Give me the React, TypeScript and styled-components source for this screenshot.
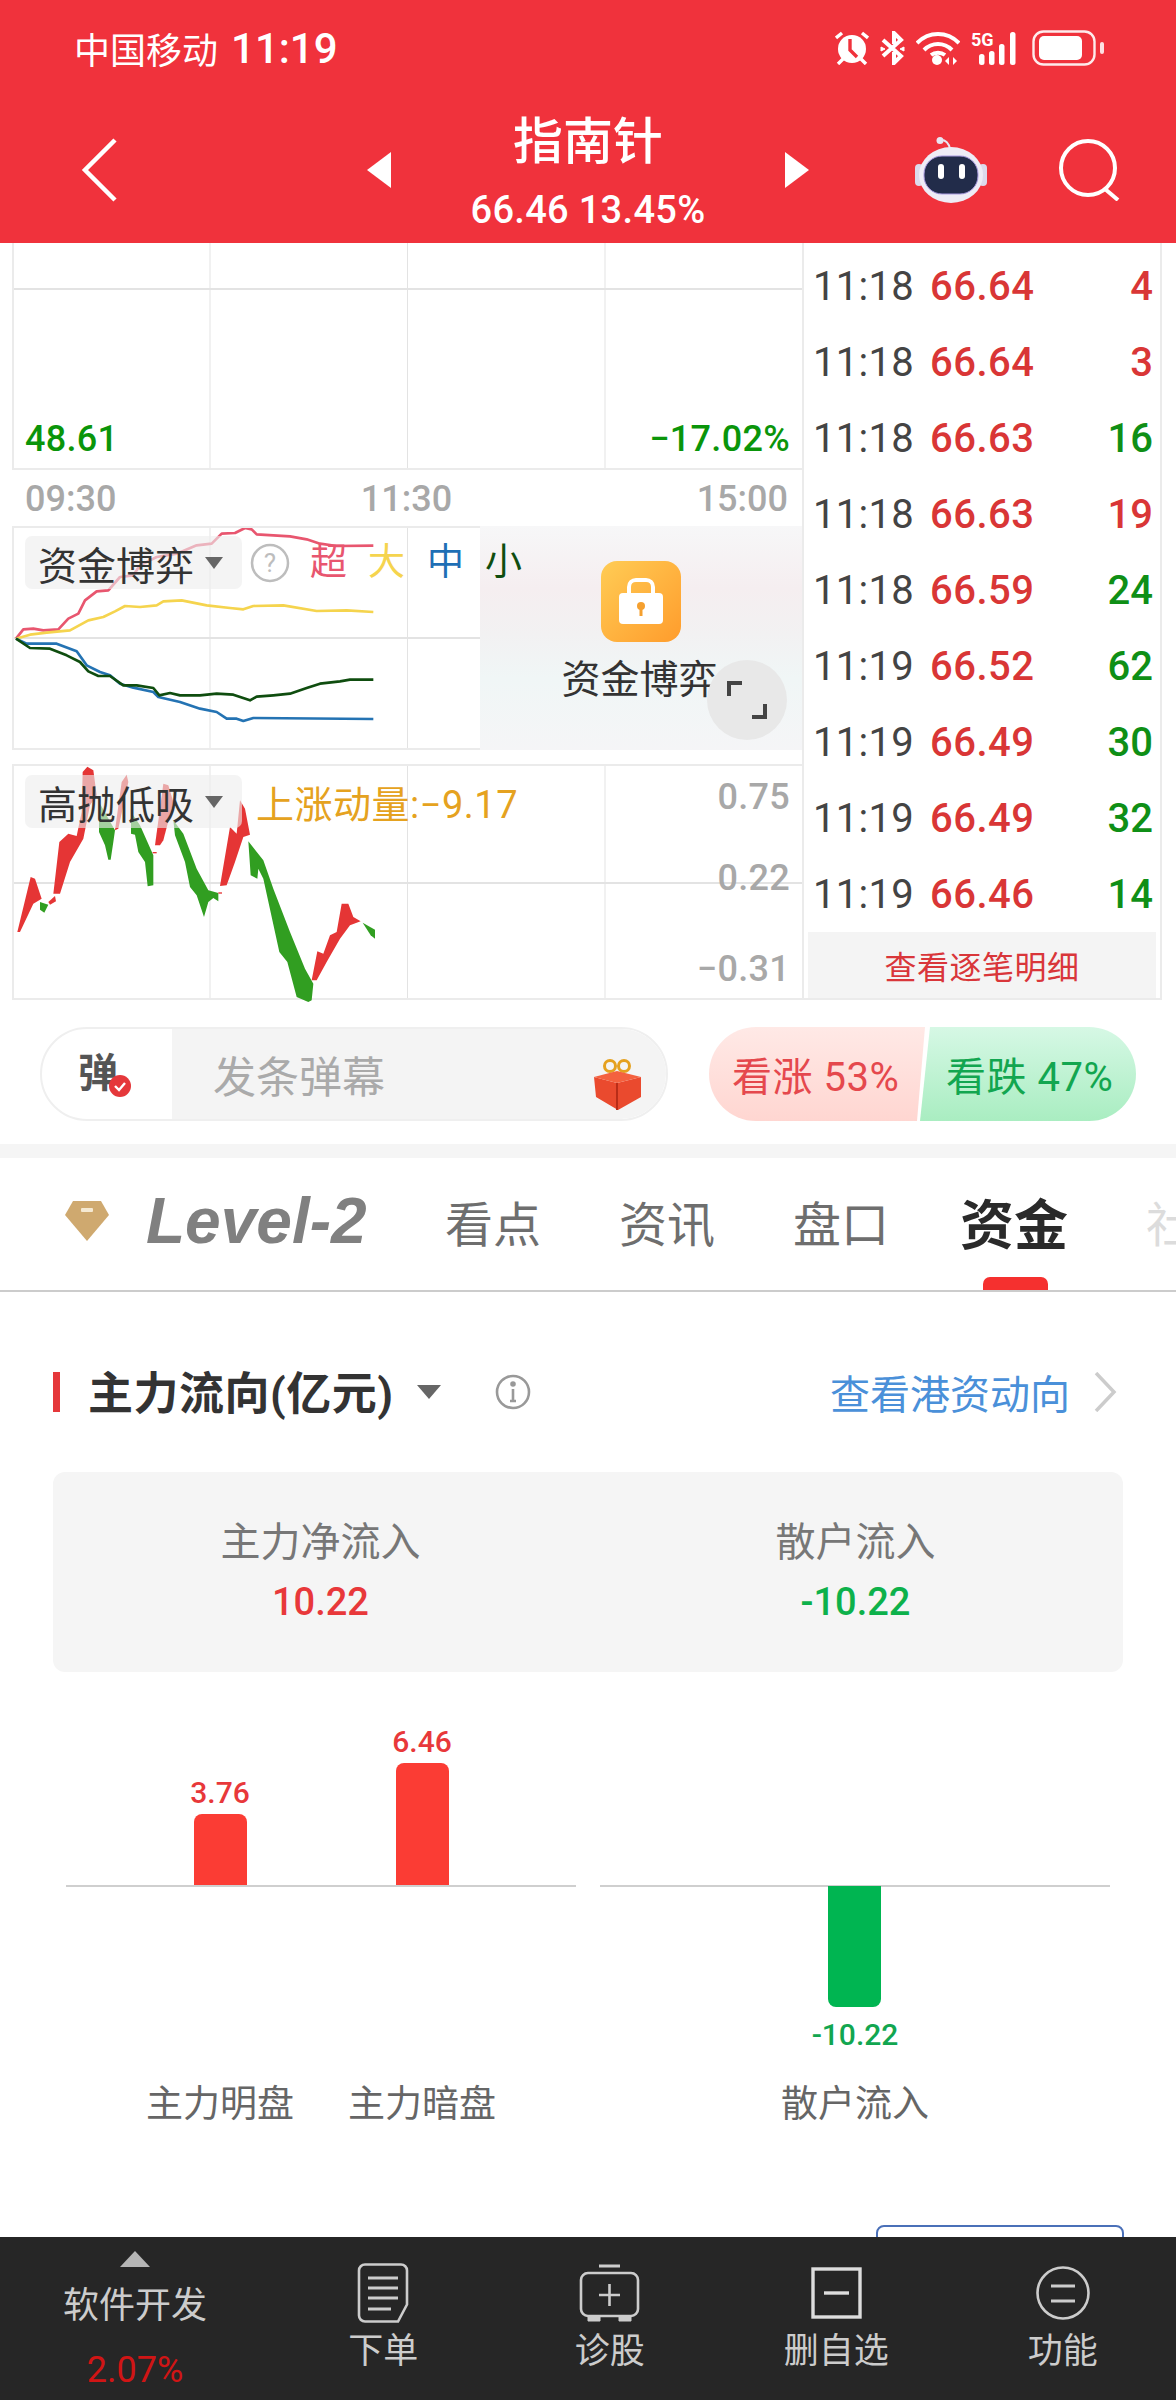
import React from "react";
import styled, { createGlobalStyle } from "styled-components";

const Global = createGlobalStyle`
  html, body {
    margin: 0;
    padding: 0;
    background: #fff;
    font-family: Roboto, "Noto Sans CJK SC", sans-serif;
  }
`;

const Page = styled.div`
  width: 1176px;
  height: 2400px;
  display: flex;
  flex-direction: column;
  overflow: hidden;
  background: #fff;
`;

const Top = styled.div`
  background: #f0323c;
  color: #fff;
  height: 243px;
  flex: none;
`;

const StatusBar = styled.div`
  height: 96px;
  display: flex;
  align-items: center;
  justify-content: space-between;
  padding: 0 71px 0 74px;
`;

const Carrier = styled.div`
  display: flex;
  align-items: center;
  gap: 13px;
  font-size: 36px;
  span:last-child {
    font-size: 42px;
    font-weight: 500;
  }
`;

const StatusIcons = styled.div`
  display: flex;
  align-items: center;
  gap: 11px;
`;

const Header = styled.div`
  height: 147px;
  display: grid;
  grid-template-columns: 1fr auto 1fr;
  align-items: center;
`;

const BackButton = styled.div`
  padding-left: 81px;
  display: flex;
`;

const Switcher = styled.div`
  width: 443px;
  display: flex;
  align-items: center;
  justify-content: space-between;
`;

const TitleBlock = styled.div`
  padding-top: 8px;
  display: flex;
  flex-direction: column;
  align-items: center;
`;

const StockName = styled.div`
  font-size: 50px;
  line-height: 56px;
  font-weight: 500;
`;

const StockPrice = styled.div`
  margin-top: 17px;
  font-size: 38px;
  line-height: 46px;
  font-weight: 500;
  letter-spacing: 0.3px;
`;

const HeaderActions = styled.div`
  display: flex;
  justify-content: flex-end;
  align-items: center;
  gap: 71px;
  padding-right: 56px;
`;

const Market = styled.div`
  flex: none;
  margin-left: 12px;
  width: 1150px;
  height: 757px;
  display: grid;
  grid-template-columns: 790px 360px;
`;

const Charts = styled.div`
  display: flex;
  flex-direction: column;
`;

const Frame = styled.div<{ $height: number; $lineY: number; $top?: boolean }>`
  position: relative;
  flex: none;
  height: ${(p) => p.$height}px;
  box-sizing: border-box;
  border-left: 2px solid #ebebeb;
  border-bottom: 2px solid #ebebeb;
  border-top: ${(p) => (p.$top ? "2px solid #ebebeb" : "0")};
  background:
    linear-gradient(#e3e3e3, #e3e3e3) 0 ${(p) => p.$lineY}px / 100% 2px no-repeat,
    linear-gradient(to right, transparent 195.5px, #e3e3e3 195.5px, #e3e3e3 197px, transparent 197px) 0 0 / 197.5px 100%;
  svg.plot {
    position: absolute;
    left: -2px;
    top: 0;
    display: block;
  }
`;

const ChartValue = styled.span<{ $side: "left" | "right"; $top: number; $color: string }>`
  position: absolute;
  ${(p) => (p.$side === "left" ? "left: 11px;" : "right: 12px;")}
  top: ${(p) => p.$top}px;
  font-size: 36px;
  line-height: 44px;
  font-weight: 500;
  letter-spacing: 0.3px;
  color: ${(p) => p.$color};
`;

const TimeAxis = styled.div`
  height: 56px;
  flex: none;
  display: flex;
  align-items: center;
  justify-content: space-between;
  padding: 2px 14px 0 13px;
  box-sizing: border-box;
  font-size: 36px;
  font-weight: 500;
  color: #a8a8a8;
`;

const Legend = styled.div`
  position: absolute;
  z-index: 2;
  left: 11px;
  top: 8px;
  display: flex;
  align-items: center;
`;

const Chip = styled.div`
  width: 217px;
  height: 53px;
  box-sizing: border-box;
  padding-left: 13px;
  display: flex;
  align-items: center;
  gap: 11px;
  border-radius: 7px;
  background: rgba(238, 238, 238, 0.62);
  color: #333;
  font-size: 39px;
  white-space: nowrap;
`;

const ChipArrow = styled.i`
  width: 0;
  height: 0;
  border-left: 9px solid transparent;
  border-right: 9px solid transparent;
  border-top: 12px solid #666;
`;

const LegendWord = styled.span<{ $color: string; $left: number }>`
  margin-left: ${(p) => p.$left}px;
  font-size: 37px;
  line-height: 44px;
  color: ${(p) => p.$color};
`;

const Momentum = styled.span`
  margin-left: 14px;
  font-size: 38px;
  letter-spacing: 0.5px;
  color: #e5a220;
  white-space: nowrap;
`;

const Locked = styled.div`
  position: absolute;
  top: -2px;
  right: 0;
  bottom: -2px;
  width: 322px;
  padding-top: 35px;
  box-sizing: border-box;
  display: flex;
  flex-direction: column;
  align-items: center;
  background: linear-gradient(180deg, #f7f7f8 0, #f5eef0 28%, #f2f1f2 48%, #f0f6f6 68%, #f5f5f7 100%);
  color: #333;
  font-size: 39px;
`;

const LockedName = styled.div`
  margin-top: 16px;
  margin-right: 3px;
  line-height: 44px;
`;

const Expand = styled.div`
  position: absolute;
  right: 15px;
  top: 134px;
  width: 80px;
  height: 80px;
  border-radius: 50%;
  background: #e8e8e8;
  display: flex;
  align-items: center;
  justify-content: center;
`;

const Ticks = styled.div`
  box-sizing: border-box;
  border-left: 2px solid #ebebeb;
  border-right: 2px solid #ebebeb;
  border-bottom: 2px solid #ebebeb;
  padding-top: 5px;
  height: 757px;
`;

const TickRow = styled.div`
  height: 76px;
  display: flex;
  align-items: center;
  padding: 0 7px 0 9px;
  font-size: 40px;
`;

const TickTime = styled.span`
  color: #444;
  width: 117px;
  letter-spacing: 0.3px;
`;

const TickPrice = styled.span`
  color: #d93636;
  font-weight: 500;
  letter-spacing: 0.5px;
`;

const TickVolume = styled.span<{ $up: boolean }>`
  margin-left: auto;
  font-weight: 500;
  color: ${(p) => (p.$up ? "#d93636" : "#0f8f16")};
`;

const TickMore = styled.div`
  margin: 0 4px;
  height: 66px;
  background: #f4f4f4;
  color: #d9363a;
  font-size: 32px;
  letter-spacing: 0.5px;
  display: flex;
  align-items: center;
  justify-content: center;
`;

const ActionRow = styled.div`
  flex: none;
  height: 144px;
  padding: 27px 40px 0 40px;
  box-sizing: border-box;
  display: flex;
  gap: 41px;
`;

const Danmu = styled.div`
  width: 628px;
  height: 94px;
  box-sizing: border-box;
  border: 2px solid #efefef;
  border-radius: 47px;
  display: flex;
  overflow: hidden;
`;

const DanmuBadge = styled.div`
  position: relative;
  width: 130px;
  flex: none;
  box-sizing: border-box;
  padding: 0 0 8px 36px;
  display: flex;
  align-items: center;
  font-size: 40px;
  font-weight: 700;
  color: #555;
  svg {
    position: absolute;
    left: 67px;
    top: 46px;
  }
`;

const DanmuInput = styled.div`
  flex: 1;
  display: flex;
  align-items: center;
  justify-content: space-between;
  padding: 0 24px 0 41px;
  background: #f4f4f4;
  color: #aaa;
  font-size: 43px;
  svg {
    margin-top: 20px;
  }
`;

const Vote = styled.div`
  width: 427px;
  height: 94px;
  border-radius: 47px;
  overflow: hidden;
  display: flex;
  font-size: 40px;
  letter-spacing: 0.5px;
`;

const VoteSide = styled.div<{ $up?: boolean }>`
  width: 216px;
  flex: none;
  display: flex;
  align-items: center;
  white-space: nowrap;
  box-sizing: border-box;
  ${(p) =>
    p.$up
      ? `padding-left: 23px;
         color: #e5484d;
         background: linear-gradient(#ffe9e6, #ffd6d1);
         clip-path: polygon(0 0, 100% 0, calc(100% - 8px) 100%, 0 100%);`
      : `margin-left: -5px;
         padding-left: 26px;
         color: #12a650;
         background: linear-gradient(#d6f8e5, #a9edc1);
         clip-path: polygon(10px 0, 100% 0, 100% 100%, 0 100%);`}
`;

const Band = styled.div`
  flex: none;
  height: 14px;
  background: #f5f5f5;
`;

const Tabs = styled.div`
  flex: none;
  position: relative;
  height: 134px;
  box-sizing: border-box;
  border-bottom: 2px solid #ccc;
  padding: 0 0 6px 65px;
  display: flex;
  align-items: center;
  overflow: hidden;
  svg {
    flex: none;
  }
`;

const LevelLogo = styled.span`
  flex: none;
  width: 220px;
  margin-left: 37px;
  margin-right: 79px;
  font-size: 64px;
  line-height: 70px;
  font-weight: 700;
  font-style: italic;
  color: #808080;
  white-space: nowrap;
  font-family: "Liberation Sans", sans-serif;
`;

const Tab = styled.span<{ $active?: boolean; $faded?: boolean }>`
  position: relative;
  flex: none;
  margin-left: ${(p) => (p.$active ? -7 : 0)}px;
  margin-right: 78px;
  font-size: ${(p) => (p.$active ? 54 : 48)}px;
  font-weight: ${(p) => (p.$active ? 700 : 400)};
  color: ${(p) => (p.$active ? "#2a2a2a" : p.$faded ? "#dcdcdc" : "#6e6e6e")};
`;

const TabMark = styled.i`
  position: absolute;
  left: 983px;
  bottom: 0;
  width: 65px;
  height: 13px;
  border-radius: 7px 7px 0 0;
  background: #f5302f;
`;

const Body = styled.div`
  flex: 1;
  min-height: 0;
  overflow: hidden;
`;

const SectionHead = styled.div`
  margin: 70px 58px 0 53px;
  height: 60px;
  display: flex;
  align-items: center;
`;

const SectionMark = styled.i`
  width: 7px;
  height: 40px;
  background: #e5383b;
  margin-right: 28px;
`;

const SectionTitle = styled.h2`
  margin: 0 0 4px;
  font-size: 45px;
  letter-spacing: 0.5px;
  font-weight: 700;
  color: #333;
`;

const HeadArrow = styled.i`
  margin: 0 54px 0 23px;
  width: 0;
  height: 0;
  border-left: 12px solid transparent;
  border-right: 12px solid transparent;
  border-top: 14px solid #666;
`;

const HeadLink = styled.a`
  margin-left: auto;
  margin-right: 23px;
  color: #4a90d9;
  font-size: 40px;
`;

const Summary = styled.div`
  margin: 50px 53px 0;
  height: 200px;
  border-radius: 12px;
  background: #f5f5f5;
  display: grid;
  grid-template-columns: 1fr 1fr;
  padding-top: 46px;
  box-sizing: border-box;
`;

const SummaryCell = styled.div`
  display: flex;
  flex-direction: column;
  align-items: center;
`;

const SummaryLabel = styled.div`
  font-size: 40px;
  line-height: 50px;
  color: #777;
`;

const SummaryValue = styled.div<{ $up: boolean }>`
  margin-top: 9px;
  font-size: 38px;
  line-height: 50px;
  font-weight: 500;
  color: ${(p) => (p.$up ? "#e8383a" : "#0db14b")};
`;

const Flow = styled.div`
  display: flex;
  gap: 24px;
  padding-left: 66px;
`;

const FlowGroup = styled.div`
  width: 510px;
  display: flex;
  justify-content: center;
  background: linear-gradient(#cfcfcf, #cfcfcf) 0 213px / 100% 2px no-repeat;
`;

const FlowColumn = styled.div`
  width: 202px;
  display: flex;
  flex-direction: column;
  align-items: center;
`;

const FlowUp = styled.div`
  height: 213px;
  display: flex;
  flex-direction: column;
  justify-content: flex-end;
  align-items: center;
`;

const FlowDown = styled.div`
  height: 198px;
  display: flex;
  flex-direction: column;
  align-items: center;
`;

const Bar = styled.div<{ $up: boolean; $h: number }>`
  width: 53px;
  height: ${(p) => p.$h}px;
  background: ${(p) => (p.$up ? "#fb3c34" : "#00b551")};
  border-radius: ${(p) => (p.$up ? "8px 8px 0 0" : "0 0 8px 8px")};
  margin-top: ${(p) => (p.$up ? 0 : 1)}px;
`;

const BarValue = styled.div<{ $up: boolean }>`
  font-size: 30px;
  line-height: 36px;
  font-weight: 500;
  margin: ${(p) => (p.$up ? "0 0 3px" : "10px 0 0")};
  color: ${(p) => (p.$up ? "#e8383a" : "#12a650")};
`;

const BarName = styled.div`
  font-size: 37px;
  line-height: 44px;
  color: #666;
  white-space: nowrap;
`;

const PeekRow = styled.div`
  margin-top: 98px;
  padding-right: 52px;
  display: flex;
  justify-content: flex-end;
`;

const PeekBox = styled.div`
  width: 248px;
  height: 60px;
  box-sizing: border-box;
  border: 2px solid #4a70b8;
  border-radius: 8px;
`;

const Nav = styled.div`
  flex: none;
  height: 163px;
  background: #262626;
  color: #ccc;
  font-size: 35px;
  display: grid;
  grid-template-columns: 270px repeat(4, 226.5px);
`;

const NavStock = styled.div`
  padding-top: 14px;
  display: flex;
  flex-direction: column;
  align-items: center;
  line-height: 44px;
`;

const NavCaret = styled.i`
  width: 0;
  height: 0;
  border-left: 15px solid transparent;
  border-right: 15px solid transparent;
  border-bottom: 16px solid #b5b5b5;
`;

const NavStockName = styled.div`
  margin-top: 17px;
  font-size: 36px;
`;

const NavStockPct = styled.div`
  margin-top: 20px;
  color: #d01515;
  font-size: 36px;
`;

const NavItem = styled.div`
  padding-top: 26px;
  display: flex;
  flex-direction: column;
  align-items: center;
`;

const NavIcon = styled.div`
  height: 60px;
  display: flex;
  align-items: center;
`;

const NavLabel = styled.div`
  margin-top: 7px;
  line-height: 44px;
`;

const ticks = [
  ["11:18", "66.64", "4", true],
  ["11:18", "66.64", "3", true],
  ["11:18", "66.63", "16", false],
  ["11:18", "66.63", "19", true],
  ["11:18", "66.59", "24", false],
  ["11:19", "66.52", "62", false],
  ["11:19", "66.49", "30", false],
  ["11:19", "66.49", "32", false],
  ["11:19", "66.46", "14", false],
] as const;

const gameLines = [
  {
    color: "#e8566f",
    points:
      "48,350 70,322 100,320 130,325 175,322 205,290 235,275 255,235 290,208 325,205 360,165 400,160 420,130 470,105 530,95 590,70 635,65 665,35 705,33 735,18 755,22 770,37 820,40 870,43 920,52 960,65 1010,72 1120,71",
  },
  {
    color: "#f5d44e",
    points:
      "48,350 90,338 140,332 210,325 265,295 310,285 345,268 375,252 420,255 470,250 490,238 545,235 620,250 690,258 730,262 760,252 850,250 950,267 1040,265 1120,270",
  },
  {
    color: "#2473b3",
    points:
      "48,350 80,365 170,365 230,388 260,430 300,450 330,460 360,485 400,497 460,510 475,525 540,540 600,560 650,570 680,590 710,590 730,597 760,588 1120,591",
  },
  {
    color: "#0f4d0f",
    points:
      "48,350 90,378 150,380 200,400 240,420 265,448 295,462 330,462 370,490 410,490 460,498 478,520 510,513 540,520 600,520 650,515 700,518 750,535 770,524 820,520 870,515 920,498 960,485 1020,478 1050,473 1120,473",
  },
];

const RED = "#e53535";
const GREEN = "#319e21";

const swingShapes = [
  [RED, "52,510 92,345 105,350 125,410 100,425 60,510"],
  [RED, "145,420 165,402 168,418 150,428"],
  [GREEN, "120,420 145,428 133,452 120,443"],
  [RED, "160,395 178,240 205,215 230,222 245,150 248,30 262,14 280,25 290,100 270,130 250,230 210,300 180,395"],
  [GREEN, "297,120 345,205 340,240 332,293 325,293 315,250 297,210"],
  [RED, "345,205 365,60 380,38 385,60 370,130 355,200"],
  [GREEN, "393,150 420,190 460,280 460,370 443,373 435,300 415,270 405,218 393,215"],
  [RED, "465,250 490,65 505,70 520,120 490,235 480,250"],
  [RED, "458,270 470,270 470,274 458,274"],
  [GREEN, "520,175 550,215 590,320 625,385 655,393 655,418 640,408 625,420 612,465 590,400 570,375 555,300 525,220"],
  [RED, "655,391 666,391 666,395 655,395"],
  [RED, "660,372 690,195 710,215 720,115 735,140 750,218 730,225 705,300 680,370"],
  [GREEN, "745,238 790,295 820,380 870,510 915,620 940,665 935,715 925,720 890,705 862,600 838,570 790,350 775,320 772,350 752,340"],
  [RED, "935,655 952,568 970,575 990,520 1010,510 1025,425 1045,425 1060,465 1082,478 1050,490 1020,530 980,600 950,655"],
  [GREEN, "1088,482 1125,503 1125,530 1112,520"],
];

const Alarm = () => (
  <svg width="34" height="34" viewBox="0 0 34 34" fill="none">
    <circle cx="17" cy="18" r="14" fill="#fff" />
    <path d="M15 8v11l7 7" stroke="#f0323c" strokeWidth="3.4" />
    <path d="M1 7l6-5M33 7l-6-5M3 33l5-5M31 33l-5-5" stroke="#fff" strokeWidth="3.4" />
  </svg>
);

const Bluetooth = () => (
  <svg width="25" height="34" viewBox="0 0 25 34" fill="none" stroke="#fff" strokeWidth="4">
    <path d="M3 9l18 16-7 7V21M3 25L21 9l-7-7v11" />
    <path d="M1 16l4 2-4 2zM24 16l-4 2 4 2z" fill="#fff" strokeWidth="1" />
  </svg>
);

const Wifi = () => (
  <svg width="44" height="34" viewBox="0 0 44 34" fill="none" stroke="#fff" strokeWidth="4">
    <path d="M1 12c12-12 30-12 42 0M8 19c8-8 20-8 28 0M15 24c4-3 10-3 14 0" />
    <circle cx="21" cy="29" r="5" fill="#fff" stroke="none" />
    <path d="M33 26l-4 4 4 4zM37 26l4 4-4 4z" fill="#fff" stroke="none" />
  </svg>
);

const Signal = () => (
  <svg width="50" height="34" viewBox="0 0 50 34" fill="#fff" overflow="visible">
    <text x="0" y="15" fontSize="18" fontWeight="700" fontFamily="Roboto, sans-serif">5G</text>
    <rect x="8" y="23" width="5.500" height="11" rx="2.5" />
    <rect x="18" y="20" width="5.500" height="14" rx="2.5" />
    <rect x="28" y="13" width="5.500" height="21" rx="2.5" />
    <rect x="39" y="1" width="5.500" height="33" rx="2.5" />
  </svg>
);

const Battery = () => (
  <svg width="73" height="36" viewBox="0 0 73 36" fill="none">
    <rect x="1.5" y="1.5" width="61" height="33" rx="10" stroke="#fff" strokeWidth="2.4" opacity="0.9" />
    <rect x="7" y="6" width="43" height="24" rx="5" fill="#fff" />
    <rect x="68" y="12" width="4" height="12" rx="2" fill="#fff" opacity="0.85" />
  </svg>
);

const Robot = () => (
  <svg width="72" height="66" viewBox="0 0 72 66">
    <circle cx="25" cy="3.5" r="3.5" fill="#e8e6f2" />
    <path d="M26 3c6 0 8 4 9 9" stroke="#e8e6f2" strokeWidth="2" fill="none" />
    <rect x="0" y="27" width="8" height="22" rx="4" fill="#dcdaec" />
    <rect x="64" y="27" width="8" height="22" rx="4" fill="#dcdaec" />
    <ellipse cx="36" cy="38" rx="32" ry="28" fill="#eeecf6" />
    <rect x="9" y="19" width="54" height="38" rx="18" fill="#222c4a" stroke="#a99be0" strokeWidth="1" />
    <rect x="23" y="27" width="6" height="15" rx="3" fill="#fff" />
    <rect x="44" y="27" width="6" height="15" rx="3" fill="#fff" />
  </svg>
);

const Gift = () => (
  <svg width="49" height="51" viewBox="0 0 49 51">
    <circle cx="17" cy="7" r="5.500" fill="none" stroke="#e5a11f" strokeWidth="3" />
    <circle cx="31" cy="7" r="5.500" fill="none" stroke="#e5a11f" strokeWidth="3" />
    <path d="M1 18l23 6 24-6v20L25 51 3 38z" fill="#ea4a2e" />
    <path d="M1 18l23 6 24-6-24-6z" fill="#f4613f" />
    <path d="M24 24v27" stroke="#b92d18" strokeWidth="2" />
  </svg>
);

const Gem = () => (
  <svg width="44" height="40" viewBox="0 0 44 40">
    <path d="M8 0h28l8 14-22 26L0 14z" fill="#cfa96f" />
    <rect x="16" y="7" width="12" height="4" rx="1" fill="#f5e9d2" />
  </svg>
);

const LockIcon = () => (
  <svg width="80" height="81" viewBox="0 0 80 81">
    <defs>
      <linearGradient id="lockBg" x1="0" y1="0" x2="1" y2="1">
        <stop offset="0" stopColor="#ffcc55" />
        <stop offset="1" stopColor="#ff9c2c" />
      </linearGradient>
    </defs>
    <rect width="80" height="81" rx="16" fill="url(#lockBg)" />
    <path d="M28 34v-8c0-4 3-7 7-7h10c4 0 7 3 7 7v8" fill="none" stroke="#fff" strokeWidth="4" />
    <rect x="18" y="32" width="44" height="31" rx="4" fill="#fff" />
    <circle cx="40" cy="45" r="4" fill="#f5a02f" />
    <rect x="38.5" y="46" width="3" height="9" fill="#f5a02f" />
  </svg>
);

const App = () => (
  <Page>
    <Global />
    <Top>
      <StatusBar>
        <Carrier>
          <span>中国移动</span>
          <span>11:19</span>
        </Carrier>
        <StatusIcons>
          <Alarm />
          <Bluetooth />
          <Wifi />
          <Signal />
          <Battery />
        </StatusIcons>
      </StatusBar>
      <Header>
        <BackButton>
          <svg width="36" height="64" viewBox="0 0 36 64" fill="none" stroke="#fff" strokeWidth="4.5">
            <path d="M34 2L4 32l30 30" />
          </svg>
        </BackButton>
        <Switcher>
          <svg width="24" height="36" viewBox="0 0 24 36" fill="#fff">
            <path d="M24 0v36L0 18z" />
          </svg>
          <TitleBlock>
            <StockName>指南针</StockName>
            <StockPrice>66.46 13.45%</StockPrice>
          </TitleBlock>
          <svg width="24" height="36" viewBox="0 0 24 36" fill="#fff">
            <path d="M0 0v36l24-18z" />
          </svg>
        </Switcher>
        <HeaderActions>
          <Robot />
          <svg width="62" height="62" viewBox="0 0 62 62" fill="none" stroke="#fff" strokeWidth="4">
            <circle cx="30" cy="29" r="27" />
            <path d="M47 50l13 11" />
          </svg>
        </HeaderActions>
      </Header>
    </Top>

    <Market>
      <Charts>
        <Frame $height={227} $lineY={45}>
          <ChartValue $side="left" $top={174} $color="#0a950a">48.61</ChartValue>
          <ChartValue $side="right" $top={174} $color="#0a950a">−17.02%</ChartValue>
        </Frame>
        <TimeAxis>
          <span>09:30</span>
          <span>11:30</span>
          <span>15:00</span>
        </TimeAxis>
        <Frame $height={224} $lineY={109} $top>
          <svg className="plot" width="790" height="224" viewBox="36 18 2370 672" fill="none">
            {gameLines.map((line) => (
              <polyline key={line.color} points={line.points} stroke={line.color} strokeWidth="8" strokeLinejoin="round" />
            ))}
          </svg>
          <Legend>
            <Chip>
              资金博弈
              <ChipArrow />
            </Chip>
            <svg width="40" height="40" viewBox="0 0 40 40" style={{ marginLeft: 8 }}>
              <circle cx="20" cy="20" r="18" fill="none" stroke="#bdbdbd" strokeWidth="2.5" />
              <text x="20" y="29" textAnchor="middle" fontSize="26" fill="#bdbdbd" fontFamily="Roboto, sans-serif">?</text>
            </svg>
            <LegendWord $color="#e8566f" $left={20}>超</LegendWord>
            <LegendWord $color="#f5d44e" $left={21}>大</LegendWord>
            <LegendWord $color="#1f6fb5" $left={22}>中</LegendWord>
            <LegendWord $color="#0f4d0f" $left={21}>小</LegendWord>
          </Legend>
          <Locked>
            <LockIcon />
            <LockedName>资金博弈</LockedName>
            <Expand>
              <svg width="40" height="40" viewBox="0 0 40 40" fill="none" stroke="#444" strokeWidth="4">
                <path d="M2 16V3h13M38 24v13H25" />
              </svg>
            </Expand>
          </Locked>
        </Frame>
        <Frame $height={236} $lineY={116} $top style={{ marginTop: 14 }}>
          <svg className="plot" width="790" height="236" viewBox="36 12 2370 708">
            {swingShapes.map(([fill, points]) => (
              <polygon key={points} fill={fill} points={points} />
            ))}
          </svg>
          <Legend>
            <Chip>
              高抛低吸
              <ChipArrow />
            </Chip>
            <Momentum>上涨动量:−9.17</Momentum>
          </Legend>
          <ChartValue $side="right" $top={9} $color="#a8a8a8">0.75</ChartValue>
          <ChartValue $side="right" $top={90} $color="#a8a8a8">0.22</ChartValue>
          <ChartValue $side="right" $top={181} $color="#a8a8a8">−0.31</ChartValue>
        </Frame>
      </Charts>
      <Ticks>
        {ticks.map(([time, price, volume, up], i) => (
          <TickRow key={i}>
            <TickTime>{time}</TickTime>
            <TickPrice>{price}</TickPrice>
            <TickVolume $up={up}>{volume}</TickVolume>
          </TickRow>
        ))}
        <TickMore>查看逐笔明细</TickMore>
      </Ticks>
    </Market>

    <ActionRow>
      <Danmu>
        <DanmuBadge>
          弹
          <svg width="22" height="22" viewBox="0 0 22 22" fill="none">
            <circle cx="11" cy="11" r="11" fill="#e5383b" />
            <path d="M6 11l4 4 6-7" stroke="#fff" strokeWidth="2.4" />
          </svg>
        </DanmuBadge>
        <DanmuInput>
          发条弹幕
          <Gift />
        </DanmuInput>
      </Danmu>
      <Vote>
        <VoteSide $up>看涨 53%</VoteSide>
        <VoteSide>看跌 47%</VoteSide>
      </Vote>
    </ActionRow>
    <Band />
    <Tabs>
      <Gem />
      <LevelLogo>Level-2</LevelLogo>
      <Tab>看点</Tab>
      <Tab>资讯</Tab>
      <Tab>盘口</Tab>
      <Tab $active>资金</Tab>
      <Tab $faded>社</Tab>
      <TabMark />
    </Tabs>

    <Body>
      <SectionHead>
        <SectionMark />
        <SectionTitle>主力流向(亿元)</SectionTitle>
        <HeadArrow />
        <svg width="36" height="36" viewBox="0 0 36 36" fill="none" stroke="#999" strokeWidth="2.6">
          <circle cx="18" cy="18" r="16" />
          <path d="M18 15v12M15 27h6" />
          <circle cx="18" cy="10" r="1.5" fill="#999" />
        </svg>
        <HeadLink>查看港资动向</HeadLink>
        <svg width="25" height="40" viewBox="0 0 25 40" fill="none" stroke="#ccc" strokeWidth="3.5">
          <path d="M3 1l18 19L3 39" />
        </svg>
      </SectionHead>
      <Summary>
        <SummaryCell>
          <SummaryLabel>主力净流入</SummaryLabel>
          <SummaryValue $up>10.22</SummaryValue>
        </SummaryCell>
        <SummaryCell>
          <SummaryLabel>散户流入</SummaryLabel>
          <SummaryValue $up={false}>-10.22</SummaryValue>
        </SummaryCell>
      </Summary>
      <Flow>
        <FlowGroup>
          <FlowColumn>
            <FlowUp>
              <BarValue $up>3.76</BarValue>
              <Bar $up $h={71} />
            </FlowUp>
            <FlowDown />
            <BarName>主力明盘</BarName>
          </FlowColumn>
          <FlowColumn>
            <FlowUp>
              <BarValue $up>6.46</BarValue>
              <Bar $up $h={122} />
            </FlowUp>
            <FlowDown />
            <BarName>主力暗盘</BarName>
          </FlowColumn>
        </FlowGroup>
        <FlowGroup>
          <FlowColumn>
            <FlowUp />
            <FlowDown>
              <Bar $up={false} $h={121} />
              <BarValue $up={false}>-10.22</BarValue>
            </FlowDown>
            <BarName>散户流入</BarName>
          </FlowColumn>
        </FlowGroup>
      </Flow>
      <PeekRow>
        <PeekBox />
      </PeekRow>
    </Body>

    <Nav>
      <NavStock>
        <NavCaret />
        <NavStockName>软件开发</NavStockName>
        <NavStockPct>2.07%</NavStockPct>
      </NavStock>
      <NavItem>
        <NavIcon>
          <svg width="52" height="60" viewBox="0 0 52 60" fill="none" stroke="#ccc" strokeWidth="2.6">
            <path d="M8 1.5h36a6 6 0 0 1 6 6v34L41 58.500H8a6 6 0 0 1-6-6v-45a6 6 0 0 1 6-6z" />
            <path d="M11 15h30M11 25h30M11 35h30M11 46h23" strokeWidth="3" />
          </svg>
        </NavIcon>
        <NavLabel>下单</NavLabel>
      </NavItem>
      <NavItem>
        <NavIcon>
          <svg width="61" height="58" viewBox="0 0 61 58" fill="none" stroke="#ccc" strokeWidth="2.6">
            <path d="M20 2h21" strokeWidth="3" />
            <rect x="2" y="9" width="57" height="43" rx="7" />
            <path d="M30.500 20v22M20 31h21" />
            <path d="M9 53h12v4H9zM40 53h12v4H40z" fill="#ccc" strokeWidth="1" />
          </svg>
        </NavIcon>
        <NavLabel>诊股</NavLabel>
      </NavItem>
      <NavItem>
        <NavIcon>
          <svg width="51" height="52" viewBox="0 0 51 52" fill="none" stroke="#ddd" strokeWidth="3.4">
            <rect x="2" y="2" width="47" height="48" />
            <path d="M13 26h25" />
          </svg>
        </NavIcon>
        <NavLabel>删自选</NavLabel>
      </NavItem>
      <NavItem>
        <NavIcon>
          <svg width="54" height="54" viewBox="0 0 54 54" fill="none" stroke="#ccc" strokeWidth="2.6">
            <circle cx="27" cy="27" r="25.500" />
            <path d="M15 20h24M15 35h24" strokeWidth="3" />
          </svg>
        </NavIcon>
        <NavLabel>功能</NavLabel>
      </NavItem>
    </Nav>
  </Page>
);

export default App;
